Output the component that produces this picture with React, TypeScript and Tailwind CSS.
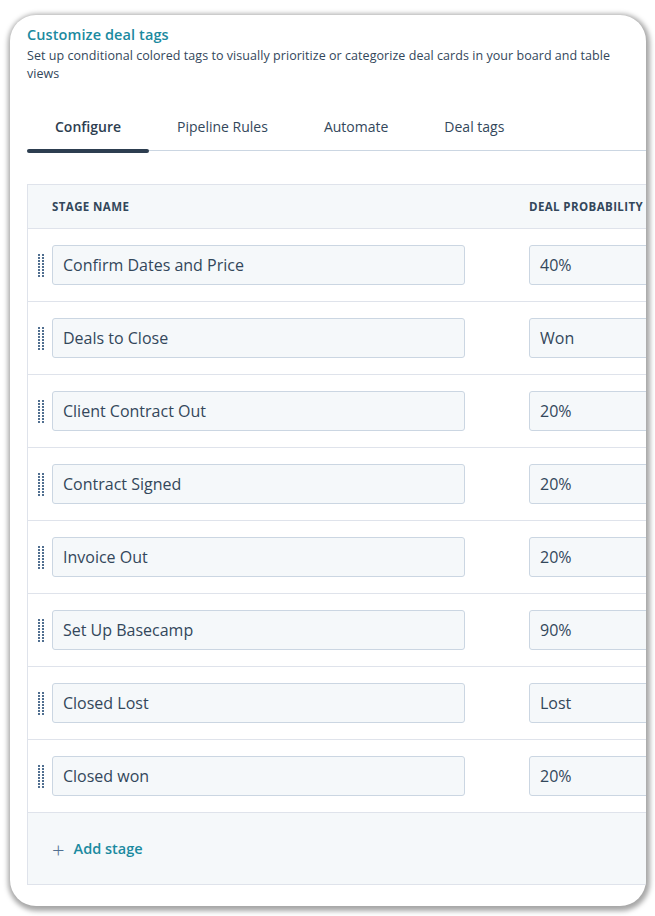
import React from "react";

const rows = [
  ["Confirm Dates and Price", "40%"],
  ["Deals to Close", "Won"],
  ["Client Contract Out", "20%"],
  ["Contract Signed", "20%"],
  ["Invoice Out", "20%"],
  ["Set Up Basecamp", "90%"],
  ["Closed Lost", "Lost"],
  ["Closed won", "20%"],
];

function Handle() {
  return (
    <div className="grid grid-cols-2 gap-x-[2px] gap-y-[1px] w-[6px]">
      {Array.from({ length: 16 }).map((_, i) => (
        <div key={i} className="w-[2px] h-[2px] bg-[#516f90]" />
      ))}
    </div>
  );
}

export default function App() {
  return (
    <div
      className="w-[655px] h-[916px] bg-white pl-[10px] pt-[15px]"
      style={{ fontFamily: '"Open Sans", "Noto Sans", sans-serif' }}
    >
      <div className="w-[636px] h-[891px] rounded-[26px] bg-white overflow-hidden shadow-[1px_2px_5px_3px_rgba(0,0,0,0.35)] pl-[17px] pt-[10px]">
        <div className="text-[14.5px] leading-[20px] font-semibold text-[#1b8aa0] tracking-[0.1px]">Customize deal tags</div>
        <div className="mt-[2px] text-[12.5px] leading-[18px] text-[#33475b] pr-[30px] tracking-[0.05px]">
          Set up conditional colored tags to visually prioritize or categorize deal cards in your board and table views
        </div>
        <div className="mt-[34px] flex border-b border-[#cbd6e2] text-[14px] leading-[20px] text-[#33475b]">
          {["Configure", "Pipeline Rules", "Automate", "Deal tags"].map((t, i) => (
            <div key={t} className="relative px-7 pb-[13px]">
              <span className={i === 0 ? "font-semibold text-[#2d3e50]" : ""}>{t}</span>
              {i === 0 && (
                <div className="absolute left-0 right-0 bottom-[-3px] h-[4px] rounded-full bg-[#2d3e50]" />
              )}
            </div>
          ))}
        </div>
        <div className="mt-[33px] w-[720px] border border-[#dfe3eb]">
          <div className="h-[44px] bg-[#f5f8fa] border-b border-[#dfe3eb] flex items-center text-[11.5px] font-bold text-[#33475b] tracking-[0.4px]">
            <div className="pl-[24px] w-[501px] shrink-0">STAGE NAME</div>
            <div className="whitespace-nowrap">DEAL PROBABILITY</div>
          </div>
          {rows.map(([name, prob]) => (
            <div key={name} className="h-[73px] bg-white border-b border-[#dfe3eb] flex items-center">
              <div className="w-[24px] shrink-0 flex justify-center pl-[2px]">
                <Handle />
              </div>
              <div className="w-[413px] shrink-0 h-[40px] bg-[#f5f8fa] border border-[#cbd6e2] rounded-[3px] flex items-center pl-[10px] text-[16px] text-[#33475b]">
                {name}
              </div>
              <div className="ml-[64px] w-[200px] shrink-0 h-[40px] bg-[#f5f8fa] border border-[#cbd6e2] rounded-[3px] flex items-center pl-[10px] text-[16px] text-[#33475b]">
                {prob}
              </div>
            </div>
          ))}
          <div className="h-[71px] bg-[#f5f8fa] flex items-center pl-[24px] gap-[9px]">
            <span className="text-[#516f90] text-[22px] leading-none font-light">+</span>
            <span className="text-[14.5px] font-semibold text-[#1b8aa0]">Add stage</span>
          </div>
        </div>
      </div>
    </div>
  );
}
